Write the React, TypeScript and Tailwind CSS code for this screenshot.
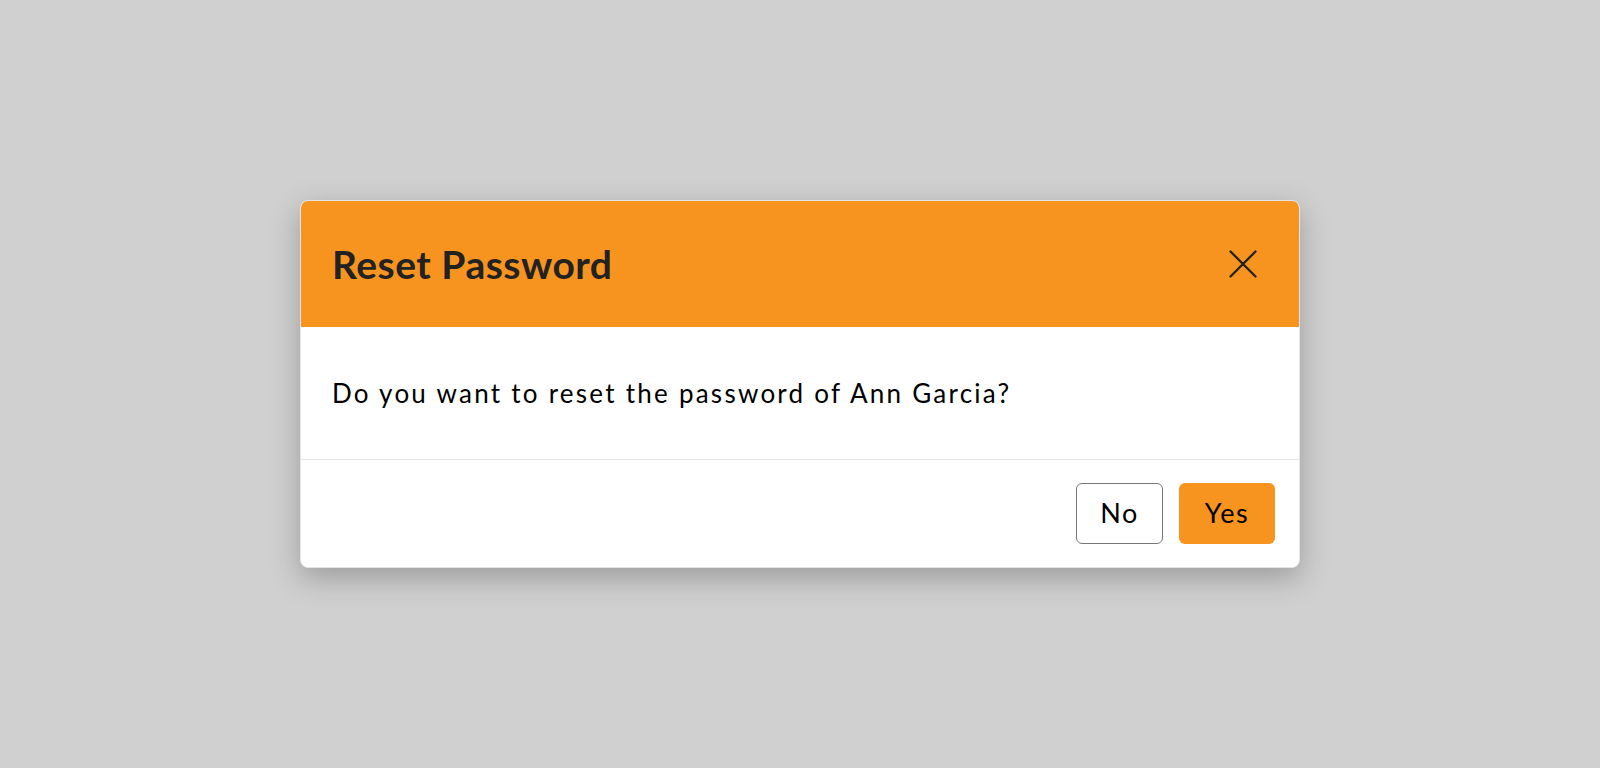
import React from "react";

export default function App() {
  return (
    <div className="min-h-screen w-full bg-[#d0d0d0] flex items-start justify-center pt-[200px]" style={{ fontFamily: "Lato, 'Noto Sans', sans-serif" }}>
      <div className="w-[1000px] bg-white rounded-[8px] border border-[#e4e4e4] shadow-[0_10px_30px_rgba(0,0,0,0.25)] overflow-hidden">
        <div className="h-[126px] bg-[#f7941f] flex items-center justify-between pl-[31px] pr-[42px]">
          <h1 className="text-[39px] font-bold text-[#222222] leading-none tracking-[0.5px]">Reset Password</h1>
          <svg width="28" height="28" viewBox="0 0 28 28" className="text-[#222]">
            <path d="M1.5 1.5L26.5 26.5M26.5 1.5L1.5 26.5" stroke="currentColor" strokeWidth="2.3" strokeLinecap="round" />
          </svg>
        </div>
        <div className="h-[133px] border-b border-[#e4e4e4] flex items-center pl-[31px]">
          <p className="text-[26px] text-black leading-none tracking-[2.25px]">Do you want to reset the password of Ann Garcia?</p>
        </div>
        <div className="h-[107px] flex items-center justify-end gap-[16px] pr-[24px]">
          <button className="h-[61px] w-[87px] rounded-[6px] border-[1.5px] border-[#777] bg-white text-[27px] text-black tracking-[1.5px]">No</button>
          <button className="h-[61px] w-[96px] rounded-[6px] bg-[#f7941f] text-[27px] text-black tracking-[1.5px]">Yes</button>
        </div>
      </div>
    </div>
  );
}
